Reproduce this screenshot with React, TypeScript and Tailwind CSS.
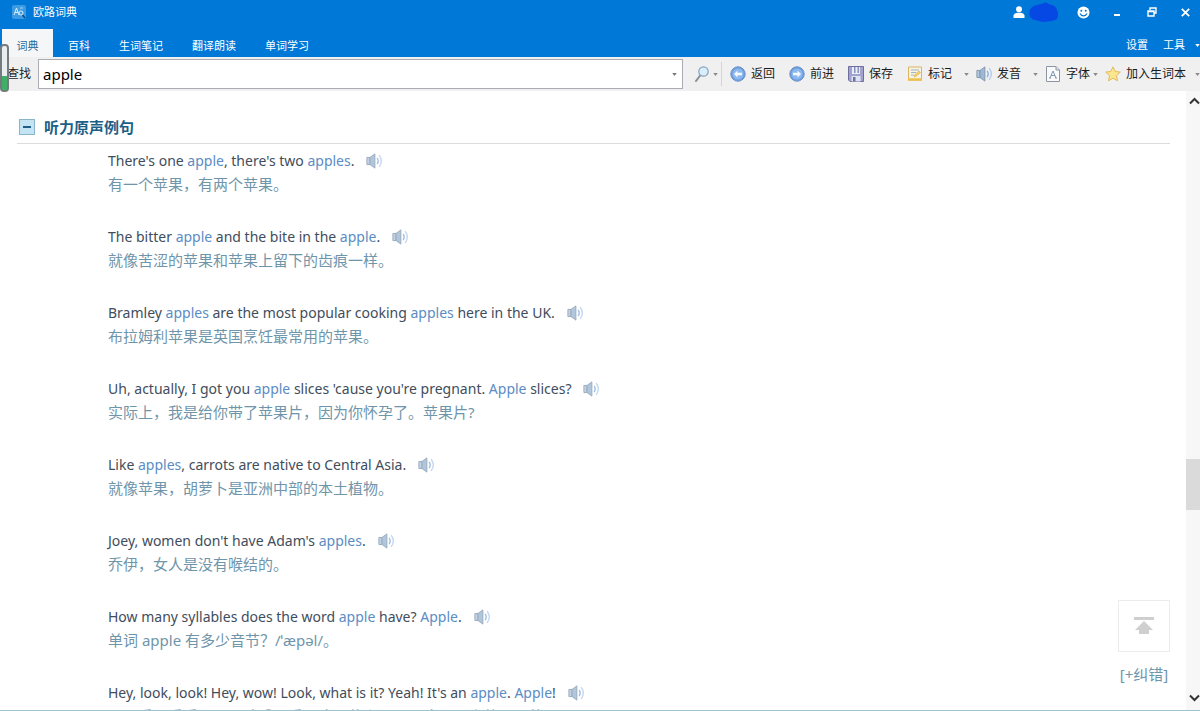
import React from 'react';

type Part = string | { hit: string };

interface Sentence {
  parts: Part[];
  translation: string;
}

const tabs = ['词典', '百科', '生词笔记', '翻译朗读', '单词学习'];

const sentences: Sentence[] = [
  {
    parts: ["There's one ", { hit: 'apple' }, ", there's two ", { hit: 'apples' }, '.'],
    translation: '有一个苹果，有两个苹果。',
  },
  {
    parts: ['The bitter ', { hit: 'apple' }, ' and the bite in the ', { hit: 'apple' }, '.'],
    translation: '就像苦涩的苹果和苹果上留下的齿痕一样。',
  },
  {
    parts: ['Bramley ', { hit: 'apples' }, ' are the most popular cooking ', { hit: 'apples' }, ' here in the UK.'],
    translation: '布拉姆利苹果是英国烹饪最常用的苹果。',
  },
  {
    parts: ['Uh, actually, I got you ', { hit: 'apple' }, " slices 'cause you're pregnant. ", { hit: 'Apple' }, ' slices?'],
    translation: '实际上，我是给你带了苹果片，因为你怀孕了。苹果片?',
  },
  {
    parts: ['Like ', { hit: 'apples' }, ', carrots are native to Central Asia.'],
    translation: '就像苹果，胡萝卜是亚洲中部的本土植物。',
  },
  {
    parts: ["Joey, women don't have Adam's ", { hit: 'apples' }, '.'],
    translation: '乔伊，女人是没有喉结的。',
  },
  {
    parts: ['How many syllables does the word ', { hit: 'apple' }, ' have? ', { hit: 'Apple' }, '.'],
    translation: '单词 apple 有多少音节？/ˈæpəl/。',
  },
  {
    parts: ["Hey, look, look! Hey, wow! Look, what is it? Yeah! It's an ", { hit: 'apple' }, '. ', { hit: 'Apple' }, '!'],
    translation: '嘿，看，看看！嘿，哇哦！看，这是什么？耶！这是一个苹果。苹果！',
  },
];

function Caret({ className = '' }: { className?: string }) {
  return (
    <svg viewBox="0 0 6 4" className={`w-[5px] h-[3px] shrink-0 ${className}`} fill="currentColor">
      <path d="M0 0h6L3 4z" />
    </svg>
  );
}

function SpeakerIcon({ className = '' }: { className?: string }) {
  return (
    <svg viewBox="0 0 18 18" className={className} fill="none">
      <path d="M1 5h3.500v8H1z" fill="#b4c8dc" stroke="#7d93ad" />
      <path d="M4.500 5l5.500-4v16l-5.500-4z" fill="#9fb9d3" stroke="#7d93ad" strokeLinejoin="round" />
      <path d="M12.500 5.500c1.600 2.300 1.600 4.700 0 7" stroke="#86aee0" strokeWidth="1.500" />
      <path d="M14.800 2.500c3 4 3 9 0 13" stroke="#b3cdec" strokeWidth="1.500" />
    </svg>
  );
}

function ArrowIcon({ forward = false }: { forward?: boolean }) {
  return (
    <svg viewBox="0 0 16 16" className="w-4 h-4" fill="none">
      <circle cx="8" cy="8" r="7.200" fill="#6f9fe0" stroke="#6a90c8" />
      <circle cx="8" cy="8" r="5.500" fill="#8db8ee" />
      <path
        d={forward ? 'M8.500 4.500L12 8l-3.500 3.500V9.200H4V6.800h4.500z' : 'M7.500 4.500L4 8l3.500 3.500V9.200H12V6.800H7.500z'}
        fill="#f4f9ff"
      />
    </svg>
  );
}

function SaveIcon() {
  return (
    <svg viewBox="0 0 16 16" className="w-4 h-4" fill="none">
      <path d="M.5.5h15v15H2L.5 14z" fill="#a3a2cf" stroke="#6f6c9e" />
      <path d="M4 1h8v7H4z" fill="#e6f0f8" />
      <path d="M6 1h1.500v6H6zM9.500 1H11v6H9.500z" fill="#8b8dbb" />
      <path d="M3.500 10h9v5.500h-9z" fill="#dde5f0" />
      <path d="M5 11h2.500v4.500H5z" fill="#716fa3" />
    </svg>
  );
}

function NoteIcon() {
  return (
    <svg viewBox="0 0 16 16" className="w-4 h-4" fill="none">
      <path d="M1.500 1h13v13h-13z" fill="#f6f3e4" stroke="#d9b565" />
      <path d="M1 13.500h14" stroke="#edc04e" strokeWidth="2.500" />
      <path d="M4 4h8M4 6.500h5M4 9h3" stroke="#a4b2c2" />
      <path d="M7 11l1-2.500L12 5l1.500 1.500L9.500 10z" fill="#f7cf62" stroke="#d6ac4c" strokeWidth=".6" />
    </svg>
  );
}

function FontIcon() {
  return (
    <svg viewBox="0 0 16 16" className="w-4 h-4" fill="none">
      <path d="M1.500.5h9.500l3.500 3.500v11.500h-13z" fill="#f8fafc" stroke="#8c96a3" />
      <path d="M11 .5V4h3.500" fill="#dfe5ec" stroke="#8c96a3" />
      <path d="M5 12l3-7 3 7M6 9.500h4M4 12h2M10 12h2" stroke="#8296b0" />
    </svg>
  );
}

function StarIcon() {
  return (
    <svg viewBox="0 0 16 16" className="w-4 h-4" fill="none">
      <path
        d="M8 .8l2.200 4.700 5.100.6-3.800 3.500 1 5.200L8 12.200l-4.500 2.600 1-5.200L.7 6.100l5.100-.6z"
        fill="#fbe58f"
        stroke="#e2bb5c"
        strokeLinejoin="round"
      />
    </svg>
  );
}

function SearchIcon() {
  return (
    <svg viewBox="0 0 16 16" className="w-4 h-4" fill="none">
      <path d="M6.500 9L2 15" stroke="#87909a" strokeWidth="2" strokeLinecap="round" />
      <circle cx="9.500" cy="5.500" r="4.700" fill="#d9eefa" stroke="#86a3bd" strokeWidth="1.200" />
    </svg>
  );
}

function LogoIcon() {
  return (
    <svg viewBox="0 0 14 14" className="w-[14px] h-[14px]" fill="none">
      <rect width="14" height="14" rx="2" fill="#3c9be2" />
      <path d="M2 10l2.500-7L7 10M3 7.500h3" stroke="#d8eefb" />
      <circle cx="9" cy="8" r="2" stroke="#d8eefb" />
      <path d="M8 3h3" stroke="#a5d3f3" />
      <path d="M10.500 10l2.500 3" stroke="#10477e" strokeWidth="1.500" />
    </svg>
  );
}

interface ToolButtonProps {
  icon: React.ReactNode;
  label: string;
  className?: string;
}

function ToolButton({ icon, label, className = '' }: ToolButtonProps) {
  return (
    <button className={`flex items-center gap-[5px] shrink-0 whitespace-nowrap ${className}`}>
      {icon}
      <span>{label}</span>
    </button>
  );
}

function TitleBar() {
  return (
    <div className="flex items-center justify-between h-6 pl-3 pr-[10px] text-white">
      <div className="flex items-center gap-[7px]">
        <LogoIcon />
        <span className="text-[11px]">欧路词典</span>
      </div>
      <div className="flex items-center">
        <button aria-label="账户" className="flex items-center gap-1">
          <svg viewBox="0 0 12 12" className="w-3 h-3" fill="currentColor">
            <circle cx="6" cy="3.200" r="3" />
            <path d="M.5 12V9.500C.5 8 3 7 4.500 6.800h3C9 7 11.500 8 11.500 9.500V12z" />
          </svg>
          <svg viewBox="0 0 30 20" className="w-[30px] h-5" fill="#0648e4">
            <path d="M2 6C6 2 12 3 17 0c2 3 8 2 10 6 2 3 3 7 1 11-5 3-10 2-14 3C9 18 4 19 1 15c-1-4-1-6 1-9z" />
          </svg>
        </button>
        <button aria-label="表情" className="ml-[18px]">
          <svg viewBox="0 0 13 13" className="w-[13px] h-[13px]" fill="none">
            <circle cx="6.500" cy="6.500" r="6" fill="#fff" />
            <circle cx="4.300" cy="4.800" r="1" fill="#0078d7" />
            <circle cx="8.700" cy="4.800" r="1" fill="#0078d7" />
            <path d="M3 7.500c1.500 3.200 5.500 3.200 7 0" stroke="#0078d7" strokeWidth="1.200" />
          </svg>
        </button>
        <button aria-label="最小化" className="ml-[23px]">
          <svg viewBox="0 0 8 10" className="w-2 h-[10px]" stroke="currentColor" strokeWidth="2">
            <path d="M1 8h6" />
          </svg>
        </button>
        <button aria-label="还原" className="ml-[26px]">
          <svg viewBox="0 0 10 10" className="w-[10px] h-[10px]" fill="none" stroke="currentColor" strokeWidth="1.400">
            <path d="M3 3V1h6v5H7" />
            <path d="M1 4h6v5H1zM1 4.500h6" />
          </svg>
        </button>
        <button aria-label="关闭" className="ml-6">
          <svg viewBox="0 0 9 9" className="w-[9px] h-[9px]" stroke="currentColor" strokeWidth="1.800">
            <path d="M.8.8l7.400 7.400M8.200.8L.8 8.200" />
          </svg>
        </button>
      </div>
    </div>
  );
}

function TabBar() {
  return (
    <div className="flex justify-between h-[33px] pl-[2px] text-[11px] text-white">
      <nav className="flex pt-[5px]">
        {tabs.map((tab, i) => (
          <button
            key={tab}
            className={i === 0 ? 'w-[51px] bg-[#f5f6f7] text-[#2b6794] pt-[6px]' : 'px-[14px] pt-[6px] ml-px'}
          >
            {tab}
          </button>
        ))}
      </nav>
      <div className="flex items-center gap-[15px] pt-[9px]">
        <button>设置</button>
        <button className="flex items-center gap-[10px]">
          工具
          <Caret />
        </button>
      </div>
    </div>
  );
}

function Toolbar() {
  return (
    <div className="flex items-center h-[34px] bg-[#f0f0f0] text-xs text-[#1c1c1c]">
      <label htmlFor="query" className="w-[38px] pl-[7px] shrink-0 whitespace-nowrap">
        查找
      </label>
      <div className="flex items-center flex-1 min-w-0 h-[30px] pr-[5px] bg-white border border-[#a9adb3]">
        <input
          id="query"
          defaultValue="apple"
          className="flex-1 min-w-0 px-1 text-[15px] text-black outline-none"
        />
        <button aria-label="历史记录">
          <Caret className="text-[#777]" />
        </button>
      </div>
      <button aria-label="搜索" className="flex items-center gap-[3px] h-6 ml-[11px] pr-[3px] border-r border-[#d5d5d5] text-[#888]">
        <SearchIcon />
        <Caret />
      </button>
      <ToolButton icon={<ArrowIcon />} label="返回" className="ml-2" />
      <ToolButton icon={<ArrowIcon forward />} label="前进" className="ml-[14px]" />
      <ToolButton icon={<SaveIcon />} label="保存" className="ml-[14px]" />
      <ToolButton icon={<NoteIcon />} label="标记" className="ml-[14px]" />
      <Caret className="ml-3 mr-[7px] text-[#888]" />
      <ToolButton icon={<SpeakerIcon className="w-4 h-[18px]" />} label="发音" />
      <Caret className="ml-3 mr-[7px] text-[#888]" />
      <ToolButton icon={<FontIcon />} label="字体" />
      <Caret className="ml-[3px] mr-[7px] text-[#888]" />
      <ToolButton icon={<StarIcon />} label="加入生词本" />
      <Caret className="ml-[9px] text-[#888]" />
    </div>
  );
}

function SentenceItem({ parts, translation }: Sentence) {
  return (
    <li className="pb-7">
      <p className="flex items-center h-6 text-sm text-[#414d5c]">
        <span className="whitespace-pre">
          {parts.map((part, i) =>
            typeof part === 'string' ? (
              part
            ) : (
              <span key={i} className="text-[#5b8cc4]">
                {part.hit}
              </span>
            )
          )}
        </span>
        <button aria-label="播放" className="ml-3 opacity-80">
          <SpeakerIcon className="w-4 h-4" />
        </button>
      </p>
      <p className="h-6 leading-[23px] text-[15px] whitespace-nowrap text-[#6f95aa]">{translation}</p>
    </li>
  );
}

function ScrollBar() {
  return (
    <div className="flex flex-col items-end w-[14px] shrink-0 bg-[#f7f7f7] overflow-hidden">
      <svg viewBox="0 0 12 8" className="w-3 h-2 mt-[6px] shrink-0" fill="none" stroke="#333" strokeWidth="2">
        <path d="M2 6.500l4.500-4.500L11 6.500" />
      </svg>
      <div className="grow-[355]" />
      <div className="w-full h-[51px] bg-[#dadada]" />
      <div className="grow-[185]" />
      <svg viewBox="0 0 12 8" className="w-3 h-2 mb-2 shrink-0" fill="none" stroke="#333" strokeWidth="2">
        <path d="M2 1.500L6.500 6 11 1.500" />
      </svg>
    </div>
  );
}

function App() {
  return (
    <div className="relative flex flex-col h-screen overflow-hidden bg-white border-b border-[#9cc3d0] font-['Noto_Sans','Noto_Sans_CJK_SC',sans-serif]">
      <header className="shrink-0 bg-[#0078d7]">
        <TitleBar />
        <TabBar />
        <Toolbar />
      </header>

      <div className="absolute left-0 top-11 w-[9px] h-12 rounded-sm border-2 border-[#757b7d] bg-[#e9eef0] flex flex-col justify-end">
        <div className="h-[14px] bg-[#3fae68]" />
      </div>

      <div className="relative flex flex-1 min-h-0">
        <main className="flex-1 min-w-0 overflow-hidden pl-[17px] pr-4 pt-6">
          <h2 className="flex items-center gap-[9px] h-[29px] pb-1 pl-[2px] border-b border-[#dcdcdc] text-[15px] font-bold text-[#1c6086]">
            <button aria-label="折叠" className="flex items-center justify-center w-4 h-4 bg-[#c4e4f4] border border-[#88b4cc]">
              <span className="w-2 h-[2px] bg-[#1c6086]" />
            </button>
            听力原声例句
          </h2>
          <ul className="pl-[91px] pt-[5px]">
            {sentences.map((s) => (
              <SentenceItem key={s.translation} {...s} />
            ))}
          </ul>
        </main>

        <div className="absolute right-[30px] bottom-6 flex flex-col items-center gap-[10px]">
          <button aria-label="返回顶部" className="flex items-center justify-center w-[52px] h-[52px] bg-white border border-[#ececec]">
            <svg viewBox="0 0 20 18" className="w-5 h-[18px]" fill="#cfcfcf">
              <path d="M0 0h20v3H0zM10 4l9 9h-4v4H5v-4H1z" />
            </svg>
          </button>
          <a href="#report" className="text-[15px] leading-6 text-[#6f95aa]">
            [+纠错]
          </a>
        </div>

        <ScrollBar />
      </div>
    </div>
  );
}

export default App;
